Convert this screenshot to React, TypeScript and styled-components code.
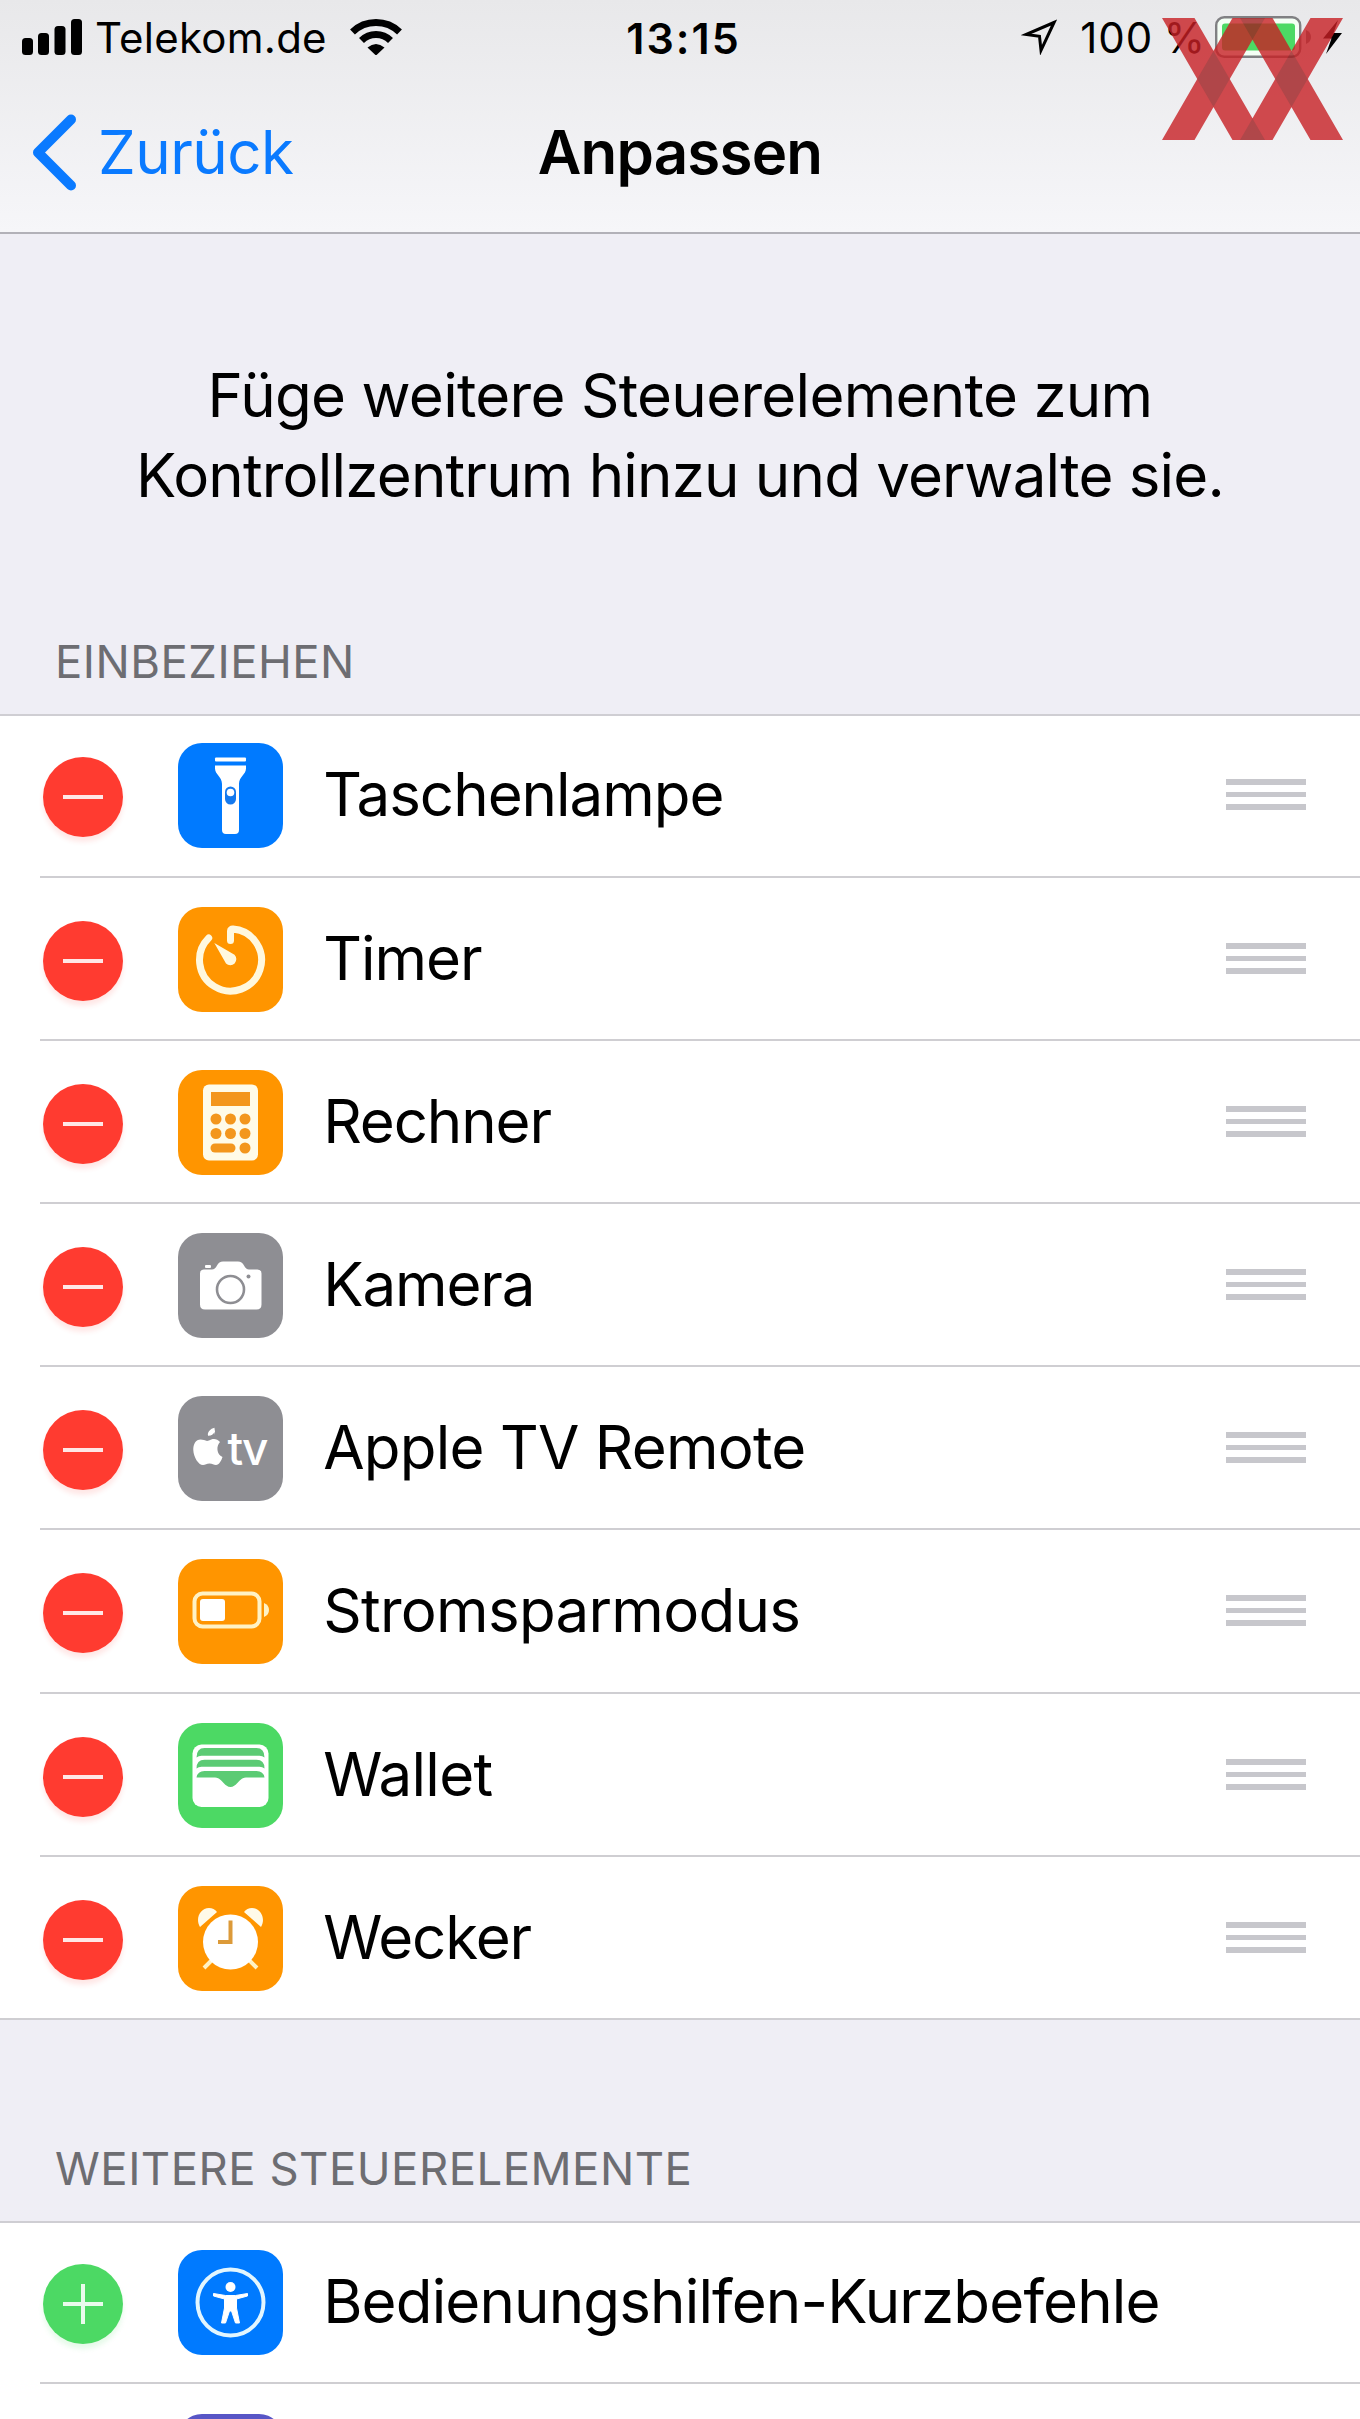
import React from 'react';
import styled, { createGlobalStyle } from 'styled-components';

const Global = createGlobalStyle`
  body { margin: 0; background: #efeef5; }
  * { box-sizing: border-box; }
`;
const Screen = styled.main`
  width: 1360px; height: 2419px; overflow: hidden; position: relative;
  display: flex; flex-direction: column; background: #efeef5;
  color: #000; font-family: Inter, "Liberation Sans", sans-serif; font-size: 60px;
`;
const Header = styled.header`
  height: 234px; flex: none; border-bottom: 2px solid #b2b1b8;
  background: linear-gradient(#e8e8ea, #f6f6f9);
`;
const StatusBar = styled.div`
  height: 74px; display: grid; grid-template-columns: 1fr auto 1fr; align-items: center;
  padding: 0 17px 0 22px; font-size: 42px; line-height: 50px;
`;
const StatusGroup = styled.div<{ $end?: boolean }>`
  display: flex; align-items: center; justify-content: ${p => (p.$end ? 'flex-end' : 'flex-start')};
`;
const Carrier = styled.span`margin: 0 23px 0 13px; padding-top: 1px; letter-spacing: 0.25px;`;
const Clock = styled.span`font-size: 43px; font-weight: 600; letter-spacing: 2px; padding: 1px 0 0 2px;`;
const Percent = styled.span`margin: 0 9px 0 23px; padding-top: 1px; letter-spacing: 0.9px; word-spacing: -2px; white-space: nowrap;`;
const NavBar = styled.div`
  height: 156px; display: grid; grid-template-columns: 1fr auto 1fr; align-items: center; padding: 0 31px;
`;
const Back = styled.a`
  display: flex; align-items: center; gap: 21px; color: #0a7aff; line-height: 74px; letter-spacing: -0.5px;
`;
const Title = styled.h1`
  margin: 0; font-size: 60px; line-height: 74px; font-weight: 600; letter-spacing: -0.8px;
`;
const Intro = styled.p`
  margin: 0; padding-top: 122px; height: 361px; flex: none; text-align: center;
  line-height: 79.7px; white-space: nowrap;
`;
const IntroLine = styled.span<{ $track: number }>`display: block; letter-spacing: ${p => p.$track}px;`;
const SectionTitle = styled.h2<{ $height: number }>`
  margin: 0; flex: none; height: ${p => p.$height}px; padding: 0 0 24px 55px;
  display: flex; align-items: flex-end; font-size: 45.5px; line-height: 56px; font-weight: 400;
  color: #6d6d72; letter-spacing: 0.48px;
`;
const List = styled.ul`
  margin: 0; padding: 0; list-style: none; flex: none; background: #fff;
  box-shadow: inset 0 2px #cfced3;
`;
const Row = styled.li<{ $last?: boolean }>`
  height: 163.2px; display: flex; align-items: center; padding: 0 54px 0 43.4px;
  background: linear-gradient(#cfced2, #cfced2) ${p => (p.$last ? '0' : '40px')} 100% / 100% 2px no-repeat;
`;
const Toggle = styled.span<{ $add?: boolean }>`
  width: 80px; height: 80px; border-radius: 50%; flex: none; margin: 3px 54.4px 0 0;
  background: ${p => (p.$add ? '#4cd964' : '#ff3b30')};
  box-shadow: 0 5px 5px ${p => (p.$add ? 'rgba(76,217,100,.14)' : 'rgba(255,59,48,.12)')};
`;
const Tile = styled.span<{ $color: string }>`
  width: 105px; height: 105px; border-radius: 24px; flex: none; display: block; overflow: hidden;
  background: ${p => p.$color};
`;
const Label = styled.span<{ $track: number }>`
  flex: 1; margin: -3px 0 0 40.4px; line-height: 74px; white-space: nowrap; letter-spacing: ${p => p.$track}px;
`;
const Grip = styled.span`
  width: 80px; height: 31px; flex: none; margin-top: -2px;
  background: repeating-linear-gradient(#c7c7cc 0 5.6px, transparent 5.6px 12.7px);
`;
const Watermark = styled.svg`position: absolute; left: 1162px; top: 18px;`;
const TileText = styled.text`font: 500 46px Inter, sans-serif; fill: #fff;`;

const Torch = () => <g fill="#fff">
  <rect x="37" y="14.5" width="31" height="4" rx="1" />
  <path d="M37 22.500h31v3c0 6-7 8-7 15.500v46q0 4-4 4h-9q-4 0-4-4V41c0-7.500-7-9.500-7-15.500z" />
  <rect x="47" y="43.5" width="11" height="18" rx="5.5" fill="#1479ee" /><circle cx="52.5" cy="49.5" r="3.8" />
</g>;
const Timer = () => <g>
  <path d="M52.500 33.500V24q0-2 2.500-1.900A31 31 0 1 1 30.700 31" fill="none" stroke="#fff8de" strokeWidth="7" strokeLinecap="round" strokeLinejoin="round" />
  <path d="M36.300 36 56.500 47.800A6 6 0 1 1 48 56.500Z" fill="#fff8de" />
</g>;
const Calculator = () => <g>
  <rect x="25" y="14.5" width="55" height="76" rx="6" fill="#fffbe8" />
  <g fill="#f3961d">
    <rect x="33" y="22" width="39" height="14" />
    {[38, 52.5, 67].map(x => [49, 63.5].map(y => <circle key={`${x}-${y}`} cx={x} cy={y} r="5.5" />))}
    <rect x="32.5" y="73.500" width="25" height="9" rx="4.500" /><circle cx="67" cy="78" r="5.5" />
  </g>
</g>;
const Camera = () => <g>
  <path d="M22 40.500q0-4 4-4h8q3 0 5-4 2-4 6-4h15q4 0 6 4 2 4 5 4h8.500q4 0 4 4v31q0 5-5 5H27q-5 0-5-5z" fill="#fff" />
  <rect x="27" y="32" width="6" height="3" rx="1" fill="#fff" />
  <circle cx="52.5" cy="56.5" r="13.5" fill="none" stroke="#8e8e93" strokeWidth="2.6" />
  <circle cx="70.5" cy="43.500" r="2" fill="#8e8e93" />
</g>;
const AppleTv = () => <g fill="#fff">
  <path d="M36.500 39.500c1.200-4 0-4.500 0-7.200-4 1-7.300 4-6.500 8 3 .2 5.500-1.500 6.500-3.800z" transform="translate(0 -.5)" />
  <path d="M42 46c-3-4-8-3.500-11-1.500-2 .8-3 .4-5-.4C19 41.500 15 47 15.300 54c.3 7 5 15 9.700 15 2.500 0 3.500-1.500 6.500-1.500s4 1.500 6.500 1.500c3 0 5.500-4.500 6.500-8-6-2.500-6.500-11-2.500-15z" />
  <TileText x="49.5" y="68.7" textLength="41">tv</TileText>
</g>;
const LowPower = () => <g>
  <rect x="16.500" y="34.500" width="65" height="33" rx="8" fill="none" stroke="#fff2c4" strokeWidth="4" />
  <rect x="22" y="40" width="25" height="22" rx="3" fill="#fff" />
  <path d="M86 44q5 2 5 7t-5 7z" fill="#fff2c4" />
</g>;
const Wallet = () => <g>
  <rect x="14.5" y="21.5" width="76" height="62.500" rx="9" fill="#fff" />
  <g fill="#5bcb74">
    <path d="M18.500 34.500q0-9.500 8-9.500h52q8 0 8 9.500-2-1.700-5-1.700h-58q-3 0-5 1.700z" />
    <path d="M18.500 45.500q0-8.700 8-8.700h52q8 0 8 8.700-2-1.700-5-1.700h-58q-3 0-5 1.700z" />
    <path d="M18.500 54.500q1-6.500 8-6.500h52q7 0 8 6.500H68c-7 0-9 9.500-15.500 9.500S44 54.500 37 54.500z" />
  </g>
</g>;
const Alarm = () => <g>
  <path d="M22 41c-5-8 0-19 9-19q5 0 8 4zM83 41c5-8 0-19-9-19q-5 0-8 4z" fill="#fffae8" />
  <path d="m35 73-9 9M70 73l9 9" stroke="#fff2c4" strokeWidth="4" />
  <circle cx="52.5" cy="56" r="27.500" fill="#fff" />
  <path d="M52.500 34.500v21.500H40" fill="none" stroke="#dc9a39" strokeWidth="4" />
</g>;
const Accessibility = () => <g>
  <circle cx="52.5" cy="52.5" r="33" fill="none" stroke="#e2f6ff" strokeWidth="4" />
  <circle cx="52.5" cy="37" r="5" fill="#fff" />
  <path d="m35.500 43.500 12 2h10l12-2v2.500L58.500 49v9l3 15h-4l-4-12h-2l-4 12h-4l3-15v-9l-11-3z" fill="#fff" stroke="#fff" strokeWidth="1" strokeLinejoin="round" />
</g>;

type Control = { label: string; color: string; Icon: React.FC; track: number };
const included: Control[] = [
  { label: 'Taschenlampe', color: '#007aff', Icon: Torch, track: -1 },
  { label: 'Timer', color: '#ff9500', Icon: Timer, track: -1 },
  { label: 'Rechner', color: '#ff9500', Icon: Calculator, track: -1.1 },
  { label: 'Kamera', color: '#8e8e93', Icon: Camera, track: -1.1 },
  { label: 'Apple TV Remote', color: '#8e8e93', Icon: AppleTv, track: -0.75 },
  { label: 'Stromsparmodus', color: '#ff9500', Icon: LowPower, track: -0.7 },
  { label: 'Wallet', color: '#4cd964', Icon: Wallet, track: -0.7 },
  { label: 'Wecker', color: '#ff9500', Icon: Alarm, track: -1.1 },
];
const more: Control[] = [
  { label: 'Bedienungshilfen-Kurzbefehle', color: '#007aff', Icon: Accessibility, track: -0.84 },
  { label: '', color: '#5856c6', Icon: () => null, track: 0 },
];

const ControlRow = ({ item, add, last }: { item: Control; add?: boolean; last?: boolean }) => (
  <Row $last={last}>
    <Toggle $add={add}>
      <svg width="80" height="80" viewBox="0 0 80 80" stroke="#fff" strokeOpacity=".88" strokeWidth="4">
        <path d={add ? 'M20 40h40M40 20v40' : 'M20 40h40'} />
      </svg>
    </Toggle>
    <Tile $color={item.color}><svg width="105" height="105" viewBox="0 0 105 105"><item.Icon /></svg></Tile>
    <Label $track={item.track}>{item.label}</Label>
    {!add && <Grip />}
  </Row>
);

export default function App() {
  return (
    <Screen>
      <Global />
      <Header>
        <StatusBar>
          <StatusGroup>
            <svg width="60" height="36" viewBox="0 0 60 36">
              <rect x="0" y="19" width="11" height="17" rx="3.5" /><rect x="16" y="14" width="11" height="22" rx="3.5" />
              <rect x="32.5" y="7" width="11" height="29" rx="3.5" /><rect x="49" y="0" width="11" height="36" rx="3.5" />
            </svg>
            <Carrier>Telekom.de</Carrier>
            <svg width="52" height="36" viewBox="0 0 52 36">
              <path d="M2.500 13a34 34 0 0 1 47 0M11.500 21.500a20.500 20.500 0 0 1 29 0" fill="none" stroke="#000" strokeWidth="7" />
              <path d="M17.500 28.500q8.500-7 17 0L26 36.500z" />
            </svg>
          </StatusGroup>
          <Clock>13:15</Clock>
          <StatusGroup $end>
            <svg width="36" height="36" viewBox="0 0 36 36">
              <path d="M33 3.500 5 15.500l13.500 1.800 1.500 14z" fill="none" stroke="#000" strokeWidth="3" />
            </svg>
            <Percent>100 %</Percent>
            <svg width="128" height="42" viewBox="0 0 128 42">
              <rect x="1.200" y="1.200" width="84" height="39.600" rx="8" fill="#f4fff5" stroke="#808083" strokeWidth="2.4" />
              <rect x="7" y="7.500" width="73" height="27" rx="3" fill="#4cd964" />
              <path d="M91 14q5 2 5 7t-5 7z" fill="#808083" />
              <path d="m123 4-15 18.500h8.500L111 38l16-21h-8.500z" />
            </svg>
          </StatusGroup>
        </StatusBar>
        <NavBar>
          <Back>
            <svg width="46" height="78" viewBox="0 0 46 78">
              <path d="M40 6.500 7 39.500l33 33" fill="none" stroke="#0a7aff" strokeWidth="10" strokeLinecap="round" strokeLinejoin="round" />
            </svg>
            <span>Zurück</span>
          </Back>
          <Title>Anpassen</Title>
        </NavBar>
      </Header>
      <Intro>
        <IntroLine $track={-0.7}>Füge weitere Steuerelemente zum</IntroLine>
        <IntroLine $track={-0.8}>Kontrollzentrum hinzu und verwalte sie.</IntroLine>
      </Intro>
      <SectionTitle $height={119.4}>EINBEZIEHEN</SectionTitle>
      <List>{included.map((item, i) => <ControlRow key={item.label} item={item} last={i === included.length - 1} />)}</List>
      <SectionTitle $height={201.4}>WEITERE STEUERELEMENTE</SectionTitle>
      <List>{more.map(item => <ControlRow key={item.color} item={item} add />)}</List>
      <Watermark width="181" height="122" viewBox="0 0 181 122">
        <g opacity=".8">
          <path fill="#c82025" d="M0 0h32.500L103 122H70.500zM70.500 0H103L32.500 122H0zM78 0h32.500L181 122h-32.500zM148.500 0H181l-70.500 122H78z" />
          <path fill="#a11d20" d="M51.500 33 67.700 61 51.500 89 35.200 61zM129.500 33 145.700 61l-16.200 28-16.300-28zM78 0h25L90.500 21.600zM78 122h25L90.500 100.400z" />
        </g>
      </Watermark>
    </Screen>
  );
}
